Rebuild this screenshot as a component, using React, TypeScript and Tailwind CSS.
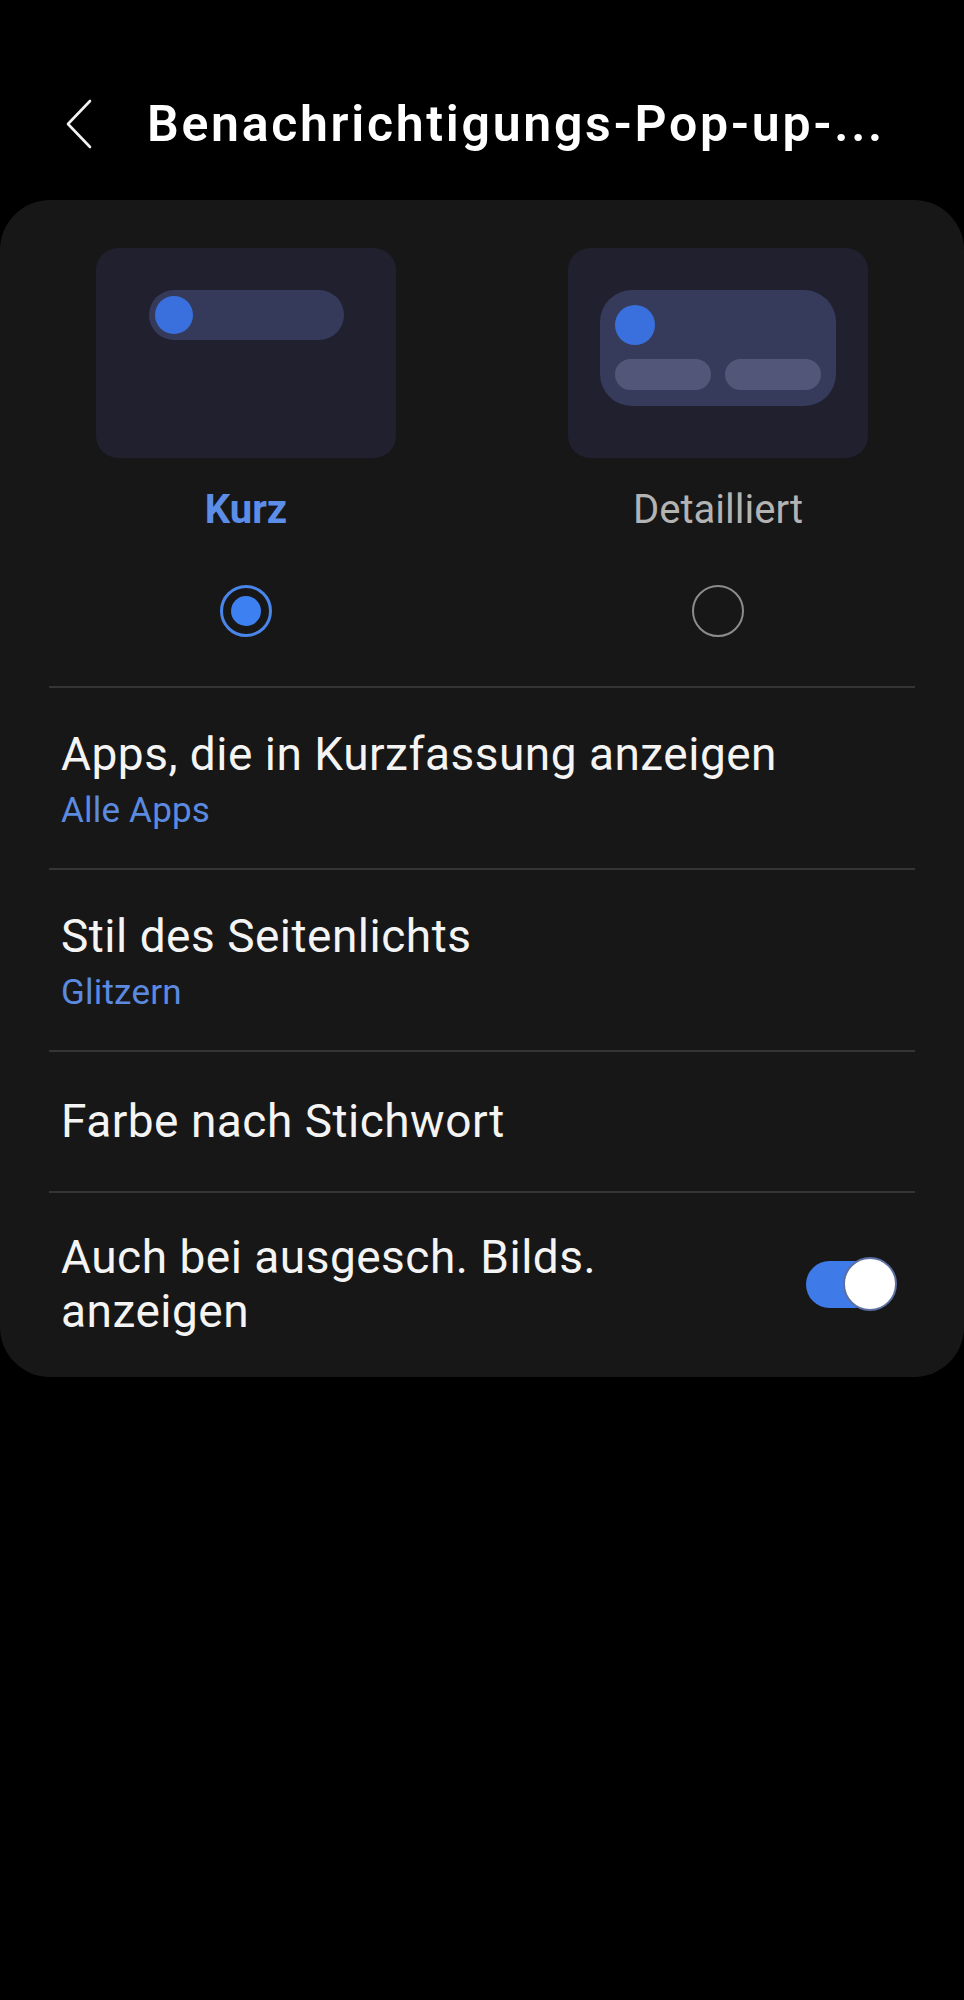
import React from 'react';

const font = { fontFamily: 'Roboto, "Noto Sans", sans-serif' };

const Divider: React.FC = () => <div className="mx-[49px] h-[2px] bg-[#353535]" />;

const Row: React.FC<{ title: string; sub?: string }> = ({ title, sub }) => (
  <div className={sub ? 'px-[61px] pt-[40px] pb-[37px]' : 'px-[61px] pt-[43px] pb-[44px]'}>
    <div className="text-[46px] leading-[52px] tracking-[0.5px] text-[#f4f4f4]">{title}</div>
    {sub && <div className="mt-[11px] text-[35px] leading-[40px] tracking-[0.2px] text-[#5b8ae0]">{sub}</div>}
  </div>
);

const App: React.FC = () => {
  return (
    <div className="min-h-[2000px] w-[964px] bg-black" style={font}>
      {/* Header */}
      <div className="flex items-center pt-[96px] pb-[48px]">
        <svg className="ml-[60px] h-[56px] w-[40px]" viewBox="0 0 40 56" fill="none">
          <path d="M30 5 L8 28 L30 51" stroke="#f2f2f2" strokeWidth="2.6" strokeLinecap="round" strokeLinejoin="round" />
        </svg>
        <h1 className="ml-[47px] text-[50px] leading-[56px] font-semibold text-white tracking-[2.7px]">
          Benachrichtigungs-Pop-up-...
        </h1>
      </div>

      {/* Card */}
      <div className="rounded-[50px] bg-[#171717]">
        <div className="grid grid-cols-2 gap-[78px] px-[49px] pt-[48px]">
          {/* Kurz */}
          <div className="flex flex-col items-center">
            <div className="flex h-[210px] w-[300px] flex-col items-center rounded-[22px] bg-[#20202f] pt-[42px]">
              <div className="flex h-[50px] w-[195px] items-center rounded-full bg-[#363a5a] pl-[6px]">
                <div className="h-[38px] w-[38px] rounded-full bg-[#3a70dd]" />
              </div>
            </div>
            <div className="mt-[28px] text-[40px] leading-[48px] font-bold text-[#5c8ee8]">Kurz</div>
            <div className="mt-[51px] flex h-[52px] w-[52px] items-center justify-center rounded-full border-[3px] border-[#4a85ea]">
              <div className="h-[30px] w-[30px] rounded-full bg-[#3d80f2]" />
            </div>
          </div>

          {/* Detailliert */}
          <div className="flex flex-col items-center">
            <div className="flex h-[210px] w-[300px] flex-col items-center rounded-[22px] bg-[#20202f] pt-[42px]">
              <div className="flex h-[116px] w-[236px] flex-col rounded-[32px] bg-[#363b5c] px-[15px] pt-[15px]">
                <div className="h-[40px] w-[40px] rounded-full bg-[#3a70dd]" />
                <div className="mt-[14px] flex gap-[14px]">
                  <div className="h-[31px] w-[96px] rounded-full bg-[#52577a]" />
                  <div className="h-[31px] w-[96px] rounded-full bg-[#52577a]" />
                </div>
              </div>
            </div>
            <div className="mt-[28px] text-[40px] leading-[48px] text-[#b3b3b3]">Detailliert</div>
            <div className="mt-[51px] h-[52px] w-[52px] rounded-full border-[2px] border-[#8c8c8c]" />
          </div>
        </div>

        <div className="mt-[49px]">
          <Divider />
          <Row title="Apps, die in Kurzfassung anzeigen" sub="Alle Apps" />
          <Divider />
          <Row title="Stil des Seitenlichts" sub="Glitzern" />
          <Divider />
          <Row title="Farbe nach Stichwort" />
          <Divider />
          <div className="flex items-center justify-between pl-[61px] pr-[67px] pt-[37px] pb-[39px]">
            <div className="text-[46px] leading-[54px] tracking-[0.5px] text-[#f4f4f4]">
              Auch bei ausgesch. Bilds.
              <br />
              anzeigen
            </div>
            <div className="relative h-[54px] w-[91px]">
              <div className="absolute left-0 top-[4px] h-[47px] w-[72px] rounded-full bg-[#3f7be8]" />
              <div className="absolute right-0 top-0 h-[54px] w-[54px] rounded-full border-[2px] border-[#5b6fa0] bg-white" />
            </div>
          </div>
        </div>
      </div>
    </div>
  );
};

export default App;
